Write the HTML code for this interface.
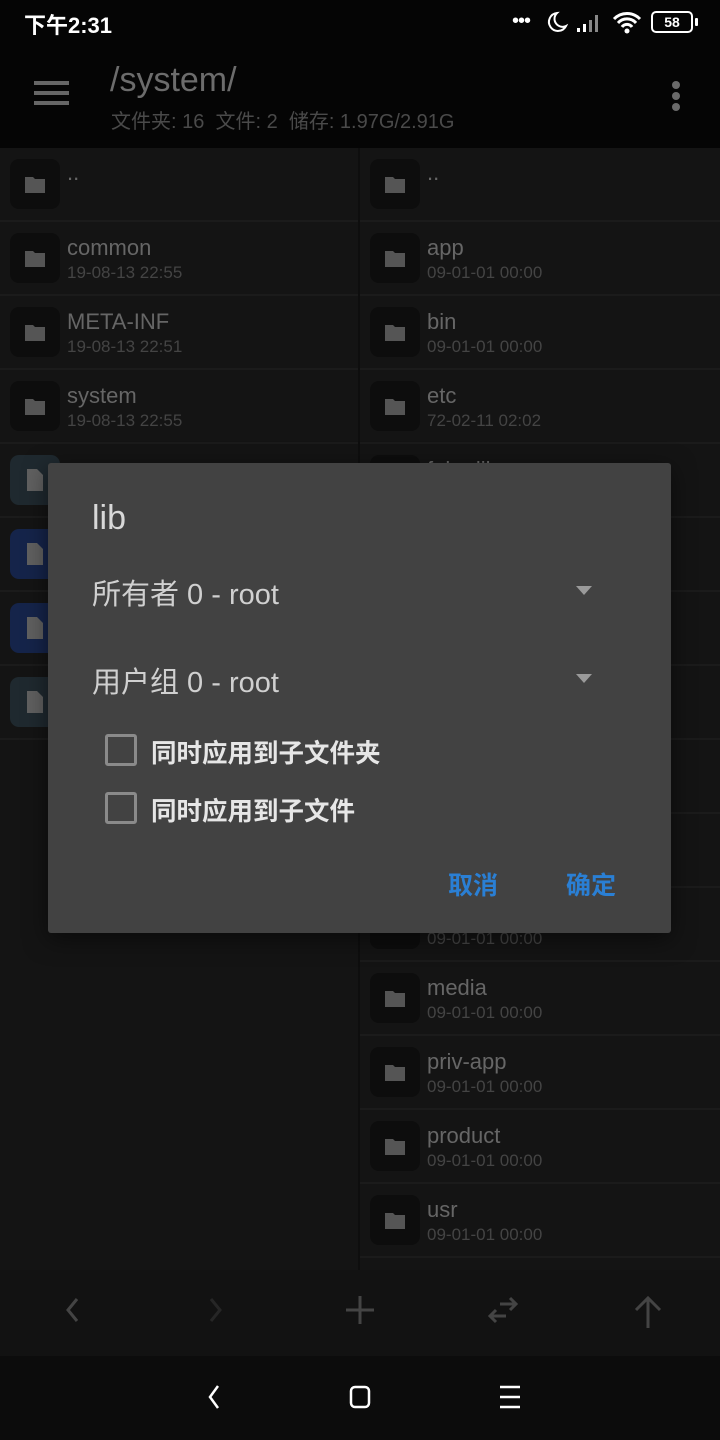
<!DOCTYPE html>
<html><head><meta charset="utf-8"><style>
*{margin:0;padding:0;box-sizing:border-box}
body{width:720px;height:1440px;background:#141414;font-family:"Liberation Sans","Noto Sans CJK SC",sans-serif;position:relative;overflow:hidden}
.abs{position:absolute}
.row{position:absolute;height:74px;border-bottom:2px solid #1b1b1b}
.ic{position:absolute;left:10px;top:11px;width:50px;height:50px;border-radius:9px;background:#0d0d0d}
.ic svg{position:absolute;left:13px;top:13px}
.nm{position:absolute;left:67px;top:13px;font-size:22px;color:#666}
.dt{position:absolute;left:67px;top:41px;font-size:17px;color:#444}
</style></head><body>
<div class="abs" style="left:0;top:0;width:720px;height:148px;background:#050505"></div>
<div class="abs" style="left:24px;top:8px;font-size:22px;color:#fff;font-weight:bold">下午2:31</div>
<div class="abs" style="left:512px;top:10px;font-size:20px;color:#fff;letter-spacing:-1px">•••</div>
<svg class="abs" style="left:543px;top:10px" width="26" height="24"><path d="M14 3a9 9 0 1 0 9 13a8 8 0 0 1-9-13z" fill="none" stroke="#fff" stroke-width="2"/></svg>
<svg class="abs" style="left:576px;top:12px" width="28" height="22"><g fill="#888"><rect x="1" y="16" width="3" height="4" fill="#fff"/><rect x="7" y="12" width="3" height="8" fill="#fff"/><rect x="13" y="8" width="3" height="12"/><rect x="19" y="3" width="3" height="17"/></g></svg>
<svg class="abs" style="left:612px;top:10px" width="32" height="26"><path d="M2 9a18 18 0 0 1 26 0M6 13a12 12 0 0 1 18 0M10 17a6 6 0 0 1 10 0" stroke="#fff" stroke-width="3" fill="none"/><circle cx="15" cy="21" r="2.5" fill="#fff"/></svg>
<div class="abs" style="left:651px;top:11px;width:42px;height:22px;border:2px solid #fff;border-radius:5px;color:#fff;font-size:14px;font-weight:bold;text-align:center;line-height:18px">58</div>
<div class="abs" style="left:695px;top:18px;width:3px;height:8px;background:#fff;border-radius:1px"></div>
<div class="abs" style="left:34px;top:81px;width:35px;height:4px;background:#666;box-shadow:0 10px 0 #666,0 20px 0 #666"></div>
<div class="abs" style="left:110px;top:61px;font-size:34px;color:#6c6c6c">/system/</div>
<div class="abs" style="left:111px;top:105px;font-size:20px;color:#4a4a4a">文件夹: 16&nbsp; 文件: 2&nbsp; 储存: 1.97G/2.91G</div>
<div class="abs" style="left:672px;top:81px;width:8px;height:8px;border-radius:50%;background:#6a6a6a;box-shadow:0 11px 0 #6a6a6a,0 22px 0 #6a6a6a"></div>
<div class="abs" style="left:358px;top:148px;width:2px;height:1122px;background:#0e0e0e"></div>

<div class="row" style="left:0;top:148px;width:358px"><div class="ic"><svg width="24" height="24"><path d="M2 5h8l2 2h10v14H2z" fill="#555"/></svg></div><div class="nm" style="top:12px">..</div></div>
<div class="row" style="left:0;top:222px;width:358px"><div class="ic"><svg width="24" height="24"><path d="M2 5h8l2 2h10v14H2z" fill="#555"/></svg></div><div class="nm">common</div><div class="dt">19-08-13 22:55</div></div>
<div class="row" style="left:0;top:296px;width:358px"><div class="ic"><svg width="24" height="24"><path d="M2 5h8l2 2h10v14H2z" fill="#555"/></svg></div><div class="nm">META-INF</div><div class="dt">19-08-13 22:51</div></div>
<div class="row" style="left:0;top:370px;width:358px"><div class="ic"><svg width="24" height="24"><path d="M2 5h8l2 2h10v14H2z" fill="#555"/></svg></div><div class="nm">system</div><div class="dt">19-08-13 22:55</div></div>
<div class="row" style="left:0;top:444px;width:358px"><div class="ic" style="background:#1f292f"><svg width="24" height="24"><path d="M4 1h10l6 6v16H4z" fill="#606060"/></svg></div></div>
<div class="row" style="left:0;top:518px;width:358px"><div class="ic" style="background:#15244a"><svg width="24" height="24"><path d="M4 1h10l6 6v16H4z" fill="#606060"/></svg></div></div>
<div class="row" style="left:0;top:592px;width:358px"><div class="ic" style="background:#15244a"><svg width="24" height="24"><path d="M4 1h10l6 6v16H4z" fill="#606060"/></svg></div></div>
<div class="row" style="left:0;top:666px;width:358px"><div class="ic" style="background:#1f292f"><svg width="24" height="24"><path d="M4 1h10l6 6v16H4z" fill="#606060"/></svg></div></div>

<div class="row" style="left:360px;top:148px;width:360px"><div class="ic"><svg width="24" height="24"><path d="M2 5h8l2 2h10v14H2z" fill="#555"/></svg></div><div class="nm" style="top:12px">..</div></div>
<div class="row" style="left:360px;top:222px;width:360px"><div class="ic"><svg width="24" height="24"><path d="M2 5h8l2 2h10v14H2z" fill="#555"/></svg></div><div class="nm">app</div><div class="dt">09-01-01 00:00</div></div>
<div class="row" style="left:360px;top:296px;width:360px"><div class="ic"><svg width="24" height="24"><path d="M2 5h8l2 2h10v14H2z" fill="#555"/></svg></div><div class="nm">bin</div><div class="dt">09-01-01 00:00</div></div>
<div class="row" style="left:360px;top:370px;width:360px"><div class="ic"><svg width="24" height="24"><path d="M2 5h8l2 2h10v14H2z" fill="#555"/></svg></div><div class="nm">etc</div><div class="dt">72-02-11 02:02</div></div>
<div class="row" style="left:360px;top:444px;width:360px"><div class="ic"></div><div class="nm">fake-lib</div></div>
<div class="row" style="left:360px;top:518px;width:360px"></div>
<div class="row" style="left:360px;top:592px;width:360px"></div>
<div class="row" style="left:360px;top:666px;width:360px"></div>
<div class="row" style="left:360px;top:740px;width:360px"></div>
<div class="row" style="left:360px;top:814px;width:360px"></div>
<div class="row" style="left:360px;top:888px;width:360px"><div class="ic"></div><div class="dt">09-01-01 00:00</div></div>
<div class="row" style="left:360px;top:962px;width:360px"><div class="ic"><svg width="24" height="24"><path d="M2 5h8l2 2h10v14H2z" fill="#555"/></svg></div><div class="nm">media</div><div class="dt">09-01-01 00:00</div></div>
<div class="row" style="left:360px;top:1036px;width:360px"><div class="ic"><svg width="24" height="24"><path d="M2 5h8l2 2h10v14H2z" fill="#555"/></svg></div><div class="nm">priv-app</div><div class="dt">09-01-01 00:00</div></div>
<div class="row" style="left:360px;top:1110px;width:360px"><div class="ic"><svg width="24" height="24"><path d="M2 5h8l2 2h10v14H2z" fill="#555"/></svg></div><div class="nm">product</div><div class="dt">09-01-01 00:00</div></div>
<div class="row" style="left:360px;top:1184px;width:360px"><div class="ic"><svg width="24" height="24"><path d="M2 5h8l2 2h10v14H2z" fill="#555"/></svg></div><div class="nm">usr</div><div class="dt">09-01-01 00:00</div></div>

<div class="abs" style="left:0;top:1270px;width:720px;height:86px;background:#121212"></div>
<svg class="abs" style="left:0;top:1270px" width="720" height="86">
<g fill="none" stroke-width="3">
<path d="M77 29l-9 11 9 11" stroke="#444"/>
<path d="M211 29l9 11-9 11" stroke="#262626"/>
<path d="M360 26v28M346 40h28" stroke="#444"/>
<path d="M490 46h16M496 40l-6 6 6 6M516 34h-16M510 28l6 6-6 6" stroke="#444"/>
<path d="M648 28v30M636 40l12-12 12 12" stroke="#444"/>
</g></svg>
<div class="abs" style="left:0;top:1356px;width:720px;height:84px;background:#0c0c0c"></div>
<svg class="abs" style="left:0;top:1356px" width="720" height="84">
<path d="M218 30l-8 11 8 11" stroke="#fff" stroke-width="2.5" fill="none"/>
<rect x="351" y="31" width="18" height="20" rx="4" stroke="#fff" stroke-width="2.5" fill="none"/>
<path d="M500 31h20M500 41h20M500 51h20" stroke="#fff" stroke-width="2.5"/>
</svg>

<div class="abs" style="left:48px;top:463px;width:623px;height:470px;background:#424242;border-radius:3px;box-shadow:0 6px 24px rgba(0,0,0,.5)">
<div class="abs" style="left:44px;top:36px;font-size:34px;color:#d8d8d8">lib</div>
<div class="abs" style="left:44px;top:108px;font-size:29px;color:#d0d0d0">所有者&nbsp;0 - root</div>
<svg class="abs" style="left:526px;top:121px" width="20" height="12"><path d="M2 2h16l-8 9z" fill="#9a9a9a"/></svg>
<div class="abs" style="left:44px;top:196px;font-size:29px;color:#d0d0d0">用户组&nbsp;0 - root</div>
<svg class="abs" style="left:526px;top:209px" width="20" height="12"><path d="M2 2h16l-8 9z" fill="#9a9a9a"/></svg>
<div class="abs" style="left:57px;top:271px;width:32px;height:32px;border:3px solid #8a8a8a;border-radius:3px"></div>
<div class="abs" style="left:103px;top:270px;font-size:25.5px;color:#e6e6e6;font-weight:bold">同时应用到子文件夹</div>
<div class="abs" style="left:57px;top:329px;width:32px;height:32px;border:3px solid #8a8a8a;border-radius:3px"></div>
<div class="abs" style="left:103px;top:328px;font-size:25.5px;color:#e6e6e6;font-weight:bold">同时应用到子文件</div>
<div class="abs" style="left:400px;top:403px;font-size:25px;color:#2a7fd4;font-weight:bold">取消</div>
<div class="abs" style="left:518px;top:403px;font-size:25px;color:#2a7fd4;font-weight:bold">确定</div>
</div>
</body></html>
